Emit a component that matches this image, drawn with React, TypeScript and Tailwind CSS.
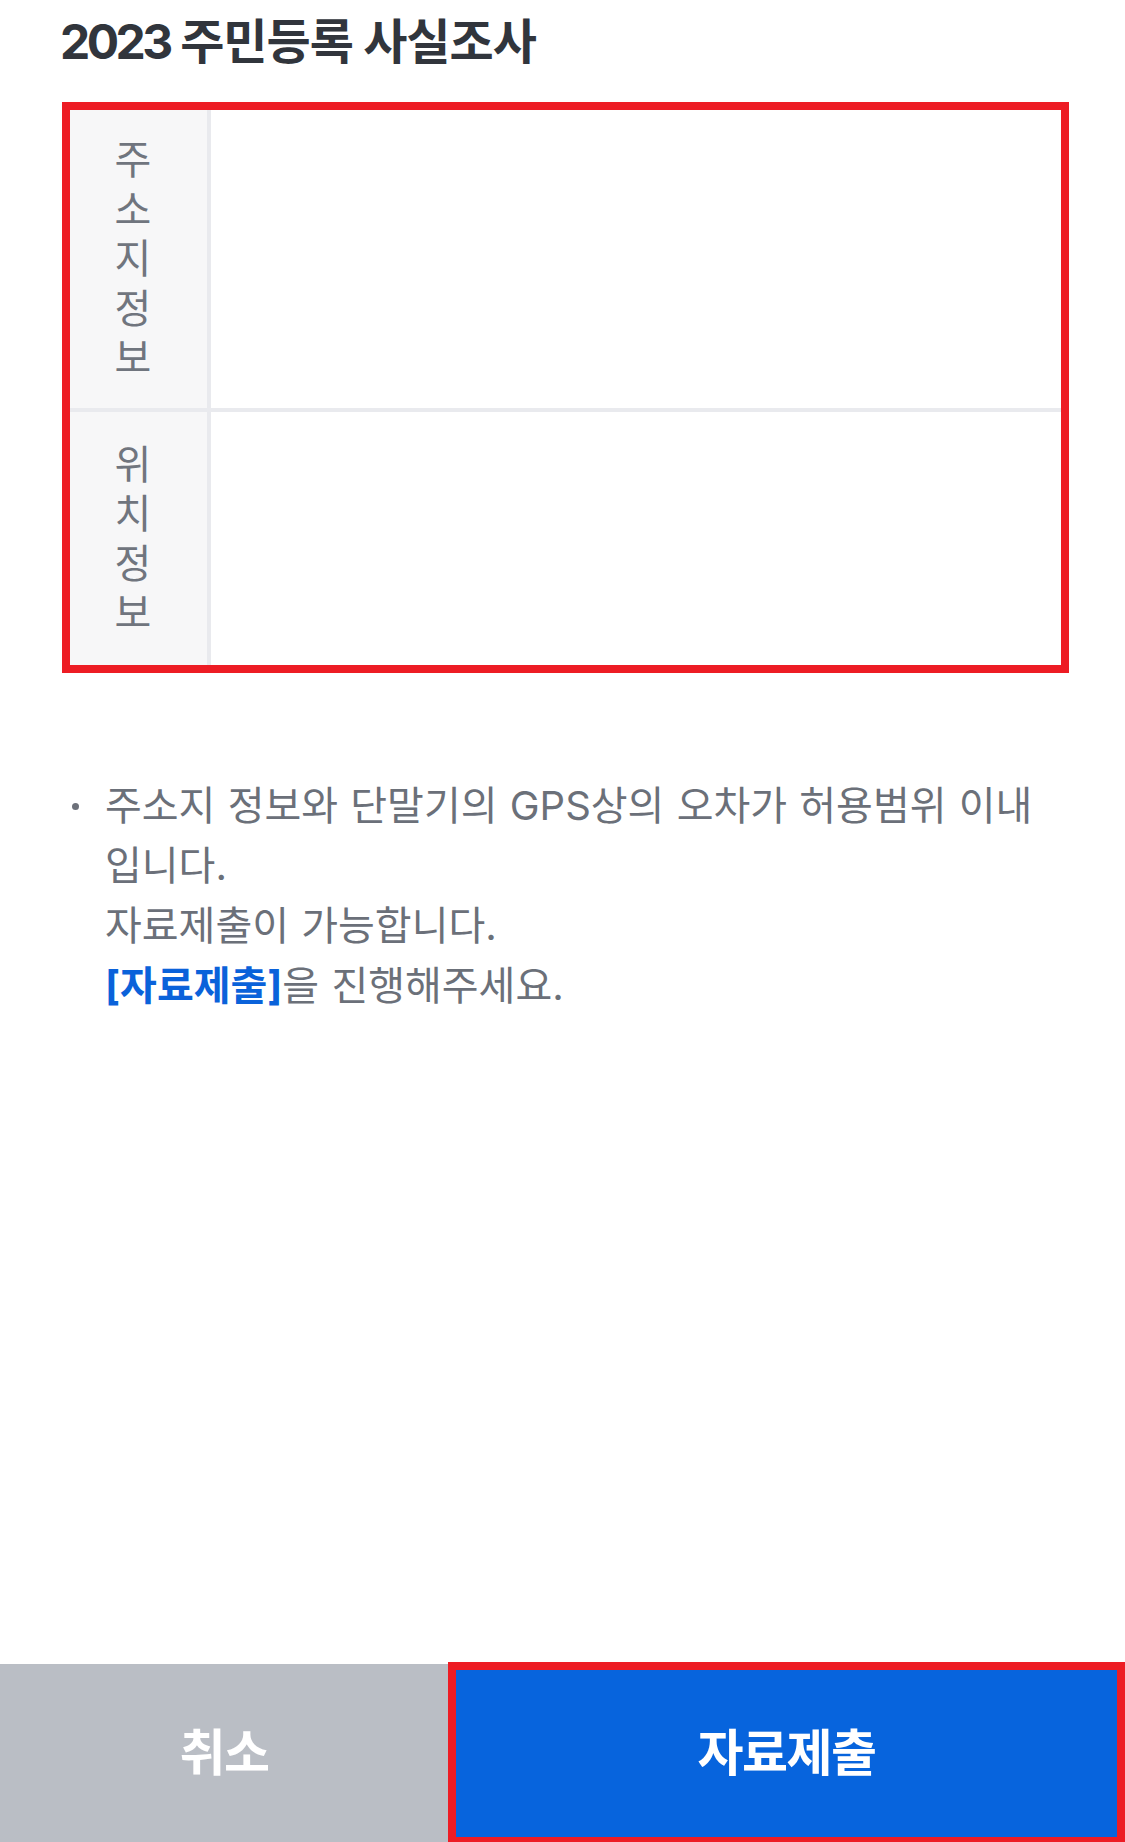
import React from "react";

function VerticalLabel({ text }: { text: string }) {
  return (
    <div className="w-[141px] shrink-0 bg-[#f7f7f8] border-r-[4px] border-[#e9eaee] flex items-center justify-center pr-[11px]">
      <div className="flex flex-col items-center text-[40px] leading-[49.5px] text-[#70757e]">
        {Array.from(text).map((ch, i) => (
          <span key={i} className="block">
            {ch}
          </span>
        ))}
      </div>
    </div>
  );
}

export default function App() {
  return (
    <div className="w-full h-[1842px] bg-white flex flex-col overflow-hidden font-['Inter','Noto_Sans_CJK_KR',sans-serif]">
      <h1 className="pt-[12px] pl-[60px] text-[48px] leading-[60px] font-bold tracking-[-1px] text-[#31353c]">
        <span className="tracking-[-3.5px]">2023</span> 주민등록 사실조사
      </h1>

      <div className="mt-[30px] ml-[62px] w-[1007px] border-[8px] border-[#ed1c24] flex flex-col">
        <div className="flex h-[298px]">
          <VerticalLabel text="주소지정보" />
          <div className="flex-1 bg-white" />
        </div>
        <div className="h-[4px] bg-[#e9eaee]" />
        <div className="flex h-[253px]">
          <VerticalLabel text="위치정보" />
          <div className="flex-1 bg-white" />
        </div>
      </div>

      <div className="mt-[103px] flex pl-[72px]">
        <div className="h-[60px] flex items-center">
          <span className="block w-[7px] h-[7px] rounded-full bg-[#6d717a]" />
        </div>
        <p className="ml-[26px] text-[40px] leading-[60px] text-[#6b7079] [word-spacing:1px] whitespace-nowrap">
          주소지 정보와 단말기의 GPS상의 오차가 허용범위 이내
          <br />
          입니다.
          <br />
          자료제출이 가능합니다.
          <br />
          <span className="font-bold text-[#0a62da]">[자료제출]</span>을 진행해주세요.
        </p>
      </div>

      <div className="mt-auto flex h-[180px]">
        <button className="mt-[2px] w-[448px] bg-[#babec5] flex items-center justify-center text-white text-[50px] font-bold tracking-[-1.5px]">
          취소
        </button>
        <button className="flex-1 bg-[#0764dd] border-[8px] border-b-[5px] border-[#ed1c24] flex items-center justify-center text-white text-[50px] font-bold tracking-[-1.5px]">
          자료제출
        </button>
      </div>
    </div>
  );
}
